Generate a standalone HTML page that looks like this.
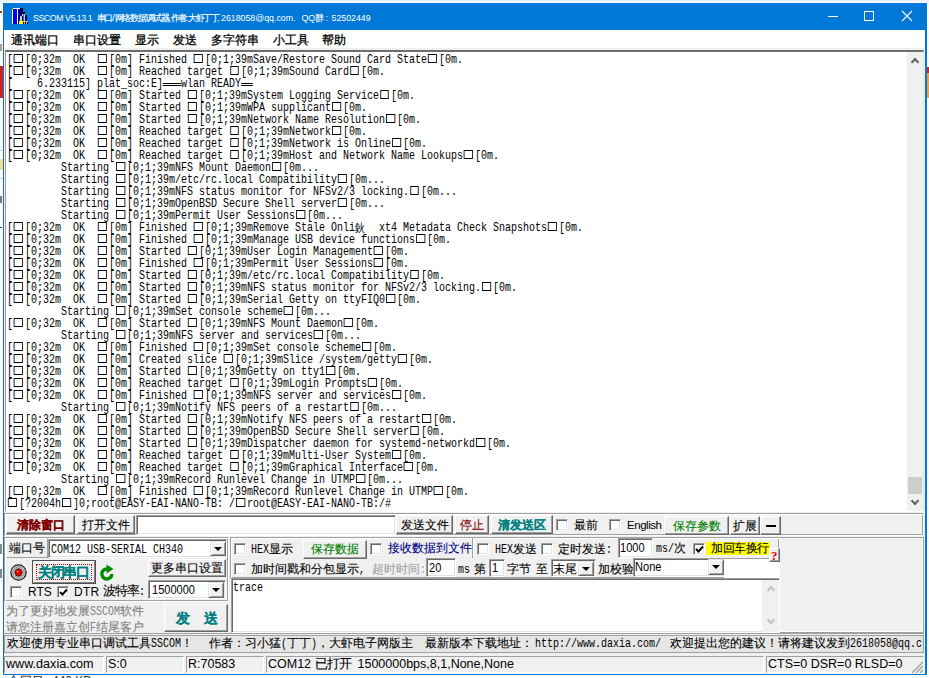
<!DOCTYPE html>
<html><head><meta charset="utf-8">
<style>
*,*:before,*:after{margin:0;padding:0;box-sizing:border-box}
html,body{width:929px;height:678px;overflow:hidden;background:#fff}
body{position:relative;font-family:"Liberation Sans",sans-serif;font-size:12px;color:#000}
.a{position:absolute}
#win{left:3px;top:3px;width:924px;height:672px;background:#F0F0F0;border-left:1px solid #0078D7;border-right:2px solid #0078D7;border-bottom:1px solid #0078D7}
#title{left:3px;top:3px;width:924px;height:27px;background:#0078D7}
.tt2{top:12px;color:#fff;font-size:8.8px;line-height:12px;white-space:nowrap}
#menu{left:4px;top:30px;width:921px;height:18px;background:#fff}
.mi{top:32px;font-size:12px;line-height:16px;white-space:nowrap}
.mi b.c{-webkit-text-stroke:0.3px #000}
#term{left:5px;top:50px;width:919px;height:462px;background:#fff;border-top:2px solid #6E6E6E;border-left:1px solid #A0A0A0;border-right:1px solid #E3E3E3;border-bottom:1px solid #fff}
#tt{left:7px;top:54px;width:1200px;height:460px;transform:scaleX(0.83333);transform-origin:0 0;font-family:"Liberation Mono",monospace;font-size:12px;line-height:12px;white-space:pre}
.ln{position:absolute;left:0;height:12px}
.bx{display:inline-block;position:relative;width:14.4px;height:12px;vertical-align:top}
.bx:after{content:"";position:absolute;left:1.2px;top:0px;width:10.8px;height:9px;border:1px solid #000;border-left-width:1.2px;border-right-width:1.2px}
.dl{display:inline-block;position:relative;height:12px;vertical-align:top}
.dl:after{content:"";position:absolute;left:0;right:0;top:5px;height:3px;border-top:1px solid #000;border-bottom:1px solid #000}
.cj{display:inline-block;width:14.4px;font-style:normal;font-family:"Liberation Sans",sans-serif;vertical-align:top}
#vs{left:907px;top:52px;width:16px;height:459px;background:#F0F0F0}
.chev{position:absolute;width:6px;height:6px;border-left:2px solid #606060;border-top:2px solid #606060}
.btn{position:absolute;background:#F0F0F0;border-top:1px solid #fff;border-left:1px solid #fff;border-right:1px solid #696969;border-bottom:1px solid #696969;box-shadow:inset -1px -1px 0 #A0A0A0;text-align:center;white-space:nowrap;font-size:12px}
.etch{position:absolute;border-top:1px solid #A0A0A0;border-left:1px solid #A0A0A0;border-right:1px solid #fff;border-bottom:1px solid #fff;box-shadow:inset 1px 1px 0 #fff,inset -1px -1px 0 #A0A0A0}
.sunk{position:absolute;background:#fff;border-top:1px solid #A0A0A0;border-left:1px solid #A0A0A0;border-right:1px solid #fff;border-bottom:1px solid #fff;box-shadow:inset 1px 1px 0 #696969,inset -1px -1px 0 #E3E3E3}
.cb{position:absolute;width:12px;height:12px;background:#fff;border-top:1px solid #A0A0A0;border-left:1px solid #A0A0A0;border-right:1px solid #fff;border-bottom:1px solid #fff;box-shadow:inset 1px 1px 0 #696969,inset -1px -1px 0 #E3E3E3}
.mq{top:636px;line-height:15px}
.sb{position:absolute;top:656px;height:17px;border-top:1px solid #A0A0A0;border-left:1px solid #A0A0A0;border-right:1px solid #fff;border-bottom:1px solid #fff}
.tt2 b.c{font-size:8.6px;-webkit-text-stroke:0.15px #fff}
.nx{transform:scaleX(.85);transform-origin:0 0}
.t{position:absolute;white-space:nowrap;font-size:12px;line-height:14px}
b.c{display:inline-block;font-weight:inherit;white-space:nowrap;-webkit-text-stroke:0.1px currentColor}
b.m{display:inline-block;white-space:pre;font-weight:inherit}
b.mi{display:inline-block;font-family:"Liberation Mono",monospace;transform:scaleX(.8333);transform-origin:0 0;font-weight:inherit}
.dd{position:absolute;width:16px;background:#F0F0F0;border-top:1px solid #E3E3E3;border-left:1px solid #E3E3E3;border-right:1px solid #696969;border-bottom:1px solid #696969;box-shadow:inset 1px 1px 0 #fff,inset -1px -1px 0 #A0A0A0}
.dd:after{content:"";position:absolute;left:3px;top:5px;border-left:4px solid transparent;border-right:4px solid transparent;border-top:4px solid #000}
</style></head><body>
<div class="a" style="left:0;top:66px;width:3px;height:32px;background:#D42020"></div>
<div class="a" style="left:0;top:159px;width:3px;height:11px;background:#F8DC90"></div>
<div class="a" style="left:927px;top:67px;width:2px;height:6px;background:#D42020"></div>
<div class="a" style="left:927px;top:73px;width:2px;height:25px;background:#F4A040"></div>
<div class="a" style="left:0;top:675px;width:929px;height:3px;background:#fff"></div>
<div class="t" style="left:8px;top:674px;color:#333;font-size:12px;line-height:14px;height:4px;overflow:hidden;clip-path:inset(1px 0 0 0)"><b class="c" style="width:12px">合</b><b class="c" style="width:12px">同</b><b class="c" style="width:12px">目</b></div>
<div class="t" style="left:52px;top:674px;color:#333;font-size:12px;line-height:14px;height:4px;overflow:hidden;clip-path:inset(1px 0 0 0)">440 KB</div>
<div class="a" style="left:0;top:0;width:929px;height:2px;background:#ECF0F8"></div>
<div class="a" style="left:0;top:11px;width:2px;height:2px;background:#B03030"></div>
<div class="a" style="left:0;top:44px;width:2px;height:7px;background:#806040;opacity:.6"></div>
<div class="a" style="left:0;top:150px;width:3px;height:1px;background:#D0D0D0"></div>
<div class="a" style="left:0;top:178px;width:3px;height:1px;background:#D0D0D0"></div>
<div class="a" style="left:0;top:196px;width:2px;height:7px;background:#404040;opacity:.7"></div>
<div class="a" style="left:0;top:227px;width:2px;height:1px;background:#404040"></div>
<div class="a" style="left:0;top:544px;width:2px;height:10px;background:#404040;opacity:.6"></div>
<div class="a" style="left:0;top:569px;width:2px;height:9px;background:#303060;opacity:.6"></div>
<div id="win" class="a"></div>
<div id="title" class="a"></div>
<!-- icon -->
<svg class="a" style="left:12px;top:8px" width="16" height="16" viewBox="0 0 16 16" shape-rendering="crispEdges">
<rect x="0" y="1" width="1" height="15" fill="#fff"/><rect x="1" y="0" width="8" height="1" fill="#fff"/>
<rect x="1" y="1" width="4" height="15" fill="#0000FF"/><rect x="5" y="1" width="1" height="15" fill="#fff"/>
<rect x="6" y="1" width="5" height="15" fill="#000080"/><rect x="8" y="0" width="3" height="1" fill="#000"/>
<rect x="10" y="1" width="1" height="5" fill="#000"/><rect x="11" y="4" width="2" height="2" fill="#000"/>
<rect x="8" y="8" width="2" height="6" fill="#C8C8B0"/><rect x="10" y="6" width="1" height="2" fill="#E0E0E0"/>
<rect x="13" y="7" width="2" height="6" fill="#000080"/><rect x="12" y="6" width="1" height="7" fill="#D0D0C0"/>
<rect x="10" y="13" width="6" height="1" fill="#C0C0C0"/>
<rect x="7" y="13" width="4" height="3" fill="#FFFF00"/><rect x="8" y="12" width="2" height="1" fill="#FFFF00"/>
<rect x="11" y="14" width="5" height="2" fill="#000"/><rect x="12" y="14" width="1" height="2" fill="#B0B0B0"/><rect x="14" y="14" width="1" height="2" fill="#B0B0B0"/>
</svg>
<div class="a tt2" style="left:33px;letter-spacing:-0.45px">SSCOM V5.13.1</div>
<div class="a tt2" style="left:96.5px"><b class="c" style="width:7.9px">串</b><b class="c" style="width:7.9px">口</b><b class="c" style="width:2.5px">/</b><b class="c" style="width:7.7px">网</b><b class="c" style="width:7.7px">络</b><b class="c" style="width:7.7px">数</b><b class="c" style="width:7.7px">据</b><b class="c" style="width:7.7px">调</b><b class="c" style="width:7.7px">试</b><b class="c" style="width:7.7px">器</b><b class="c" style="width:2px">,</b><b class="c" style="width:7.6px">作</b><b class="c" style="width:7.6px">者</b><b class="c" style="width:2.2px">:</b><b class="c" style="width:7.7px">大</b><b class="c" style="width:7.7px">虾</b><b class="c" style="width:7.7px">丁</b><b class="c" style="width:7.7px">丁</b></div>
<div class="a tt2" style="left:217px">,</div>
<div class="a tt2" style="left:221px">2618058@qq.com.</div>
<div class="a tt2" style="left:301.5px">QQ<b class="c" style="width:10.0px">群</b></div>
<div class="a tt2" style="left:325.5px">:</div>
<div class="a tt2" style="left:331.5px">52502449</div>
<!-- window buttons -->
<div class="a" style="left:828px;top:16px;width:10px;height:1px;background:#fff"></div>
<div class="a" style="left:864px;top:11px;width:10px;height:10px;border:1px solid #fff"></div>
<svg class="a" style="left:901px;top:10px" width="12" height="12" viewBox="0 0 12 12"><path d="M1 1L11 11M11 1L1 11" stroke="#fff" stroke-width="1.1"/></svg>

<div id="menu" class="a"></div>
<div class="a mi" style="left:11px"><b class="c" style="width:12px">通</b><b class="c" style="width:12px">讯</b><b class="c" style="width:12px">端</b><b class="c" style="width:12px">口</b></div>
<div class="a mi" style="left:73px"><b class="c" style="width:12px">串</b><b class="c" style="width:12px">口</b><b class="c" style="width:12px">设</b><b class="c" style="width:12px">置</b></div>
<div class="a mi" style="left:135px"><b class="c" style="width:12px">显</b><b class="c" style="width:12px">示</b></div>
<div class="a mi" style="left:173px"><b class="c" style="width:12px">发</b><b class="c" style="width:12px">送</b></div>
<div class="a mi" style="left:211px"><b class="c" style="width:12px">多</b><b class="c" style="width:12px">字</b><b class="c" style="width:12px">符</b><b class="c" style="width:12px">串</b></div>
<div class="a mi" style="left:273px"><b class="c" style="width:12px">小</b><b class="c" style="width:12px">工</b><b class="c" style="width:12px">具</b></div>
<div class="a mi" style="left:322px"><b class="c" style="width:12px">帮</b><b class="c" style="width:12px">助</b></div>

<div id="term" class="a"></div>
<div id="tt" class="a">
<div class="ln" style="top:0px">[<i class="bx"></i>[0;32m  OK  <i class="bx"></i>[0m] Finished <i class="bx"></i>[0;1;39mSave/Restore Sound Card State<i class="bx"></i>[0m.</div>
<div class="ln" style="top:12px">[<i class="bx"></i>[0;32m  OK  <i class="bx"></i>[0m] Reached target <i class="bx"></i>[0;1;39mSound Card<i class="bx"></i>[0m.</div>
<div class="ln" style="top:24px">[    6.233115] plat_soc:E]<i class="dl" style="width:21.6px"></i>wlan READY<i class="dl" style="width:14.4px"></i></div>
<div class="ln" style="top:36px">[<i class="bx"></i>[0;32m  OK  <i class="bx"></i>[0m] Started <i class="bx"></i>[0;1;39mSystem Logging Service<i class="bx"></i>[0m.</div>
<div class="ln" style="top:48px">[<i class="bx"></i>[0;32m  OK  <i class="bx"></i>[0m] Started <i class="bx"></i>[0;1;39mWPA supplicant<i class="bx"></i>[0m.</div>
<div class="ln" style="top:60px">[<i class="bx"></i>[0;32m  OK  <i class="bx"></i>[0m] Started <i class="bx"></i>[0;1;39mNetwork Name Resolution<i class="bx"></i>[0m.</div>
<div class="ln" style="top:72px">[<i class="bx"></i>[0;32m  OK  <i class="bx"></i>[0m] Reached target <i class="bx"></i>[0;1;39mNetwork<i class="bx"></i>[0m.</div>
<div class="ln" style="top:84px">[<i class="bx"></i>[0;32m  OK  <i class="bx"></i>[0m] Reached target <i class="bx"></i>[0;1;39mNetwork is Online<i class="bx"></i>[0m.</div>
<div class="ln" style="top:96px">[<i class="bx"></i>[0;32m  OK  <i class="bx"></i>[0m] Reached target <i class="bx"></i>[0;1;39mHost and Network Name Lookups<i class="bx"></i>[0m.</div>
<div class="ln" style="top:108px">         Starting <i class="bx"></i>[0;1;39mNFS Mount Daemon<i class="bx"></i>[0m...</div>
<div class="ln" style="top:120px">         Starting <i class="bx"></i>[0;1;39m/etc/rc.local Compatibility<i class="bx"></i>[0m...</div>
<div class="ln" style="top:132px">         Starting <i class="bx"></i>[0;1;39mNFS status monitor for NFSv2/3 locking.<i class="bx"></i>[0m...</div>
<div class="ln" style="top:144px">         Starting <i class="bx"></i>[0;1;39mOpenBSD Secure Shell server<i class="bx"></i>[0m...</div>
<div class="ln" style="top:156px">         Starting <i class="bx"></i>[0;1;39mPermit User Sessions<i class="bx"></i>[0m...</div>
<div class="ln" style="top:168px">[<i class="bx"></i>[0;32m  OK  <i class="bx"></i>[0m] Finished <i class="bx"></i>[0;1;39mRemove Stale Onli<i class="cj">鈥</i>  xt4 Metadata Check Snapshots<i class="bx"></i>[0m.</div>
<div class="ln" style="top:180px">[<i class="bx"></i>[0;32m  OK  <i class="bx"></i>[0m] Finished <i class="bx"></i>[0;1;39mManage USB device functions<i class="bx"></i>[0m.</div>
<div class="ln" style="top:192px">[<i class="bx"></i>[0;32m  OK  <i class="bx"></i>[0m] Started <i class="bx"></i>[0;1;39mUser Login Management<i class="bx"></i>[0m.</div>
<div class="ln" style="top:204px">[<i class="bx"></i>[0;32m  OK  <i class="bx"></i>[0m] Finished <i class="bx"></i>[0;1;39mPermit User Sessions<i class="bx"></i>[0m.</div>
<div class="ln" style="top:216px">[<i class="bx"></i>[0;32m  OK  <i class="bx"></i>[0m] Started <i class="bx"></i>[0;1;39m/etc/rc.local Compatibility<i class="bx"></i>[0m.</div>
<div class="ln" style="top:228px">[<i class="bx"></i>[0;32m  OK  <i class="bx"></i>[0m] Started <i class="bx"></i>[0;1;39mNFS status monitor for NFSv2/3 locking.<i class="bx"></i>[0m.</div>
<div class="ln" style="top:240px">[<i class="bx"></i>[0;32m  OK  <i class="bx"></i>[0m] Started <i class="bx"></i>[0;1;39mSerial Getty on ttyFIQ0<i class="bx"></i>[0m.</div>
<div class="ln" style="top:252px">         Starting <i class="bx"></i>[0;1;39mSet console scheme<i class="bx"></i>[0m...</div>
<div class="ln" style="top:264px">[<i class="bx"></i>[0;32m  OK  <i class="bx"></i>[0m] Started <i class="bx"></i>[0;1;39mNFS Mount Daemon<i class="bx"></i>[0m.</div>
<div class="ln" style="top:276px">         Starting <i class="bx"></i>[0;1;39mNFS server and services<i class="bx"></i>[0m...</div>
<div class="ln" style="top:288px">[<i class="bx"></i>[0;32m  OK  <i class="bx"></i>[0m] Finished <i class="bx"></i>[0;1;39mSet console scheme<i class="bx"></i>[0m.</div>
<div class="ln" style="top:300px">[<i class="bx"></i>[0;32m  OK  <i class="bx"></i>[0m] Created slice <i class="bx"></i>[0;1;39mSlice /system/getty<i class="bx"></i>[0m.</div>
<div class="ln" style="top:312px">[<i class="bx"></i>[0;32m  OK  <i class="bx"></i>[0m] Started <i class="bx"></i>[0;1;39mGetty on tty1<i class="bx"></i>[0m.</div>
<div class="ln" style="top:324px">[<i class="bx"></i>[0;32m  OK  <i class="bx"></i>[0m] Reached target <i class="bx"></i>[0;1;39mLogin Prompts<i class="bx"></i>[0m.</div>
<div class="ln" style="top:336px">[<i class="bx"></i>[0;32m  OK  <i class="bx"></i>[0m] Finished <i class="bx"></i>[0;1;39mNFS server and services<i class="bx"></i>[0m.</div>
<div class="ln" style="top:348px">         Starting <i class="bx"></i>[0;1;39mNotify NFS peers of a restart<i class="bx"></i>[0m...</div>
<div class="ln" style="top:360px">[<i class="bx"></i>[0;32m  OK  <i class="bx"></i>[0m] Started <i class="bx"></i>[0;1;39mNotify NFS peers of a restart<i class="bx"></i>[0m.</div>
<div class="ln" style="top:372px">[<i class="bx"></i>[0;32m  OK  <i class="bx"></i>[0m] Started <i class="bx"></i>[0;1;39mOpenBSD Secure Shell server<i class="bx"></i>[0m.</div>
<div class="ln" style="top:384px">[<i class="bx"></i>[0;32m  OK  <i class="bx"></i>[0m] Started <i class="bx"></i>[0;1;39mDispatcher daemon for systemd-networkd<i class="bx"></i>[0m.</div>
<div class="ln" style="top:396px">[<i class="bx"></i>[0;32m  OK  <i class="bx"></i>[0m] Reached target <i class="bx"></i>[0;1;39mMulti-User System<i class="bx"></i>[0m.</div>
<div class="ln" style="top:408px">[<i class="bx"></i>[0;32m  OK  <i class="bx"></i>[0m] Reached target <i class="bx"></i>[0;1;39mGraphical Interface<i class="bx"></i>[0m.</div>
<div class="ln" style="top:420px">         Starting <i class="bx"></i>[0;1;39mRecord Runlevel Change in UTMP<i class="bx"></i>[0m...</div>
<div class="ln" style="top:432px">[<i class="bx"></i>[0;32m  OK  <i class="bx"></i>[0m] Finished <i class="bx"></i>[0;1;39mRecord Runlevel Change in UTMP<i class="bx"></i>[0m.</div>
<div class="ln" style="top:444px"><i class="bx"></i>[?2004h<i class="bx"></i>]0;root@EASY-EAI-NANO-TB: /<i class="bx"></i>root@EASY-EAI-NANO-TB:/#</div>
</div>
<div id="vs" class="a">
 <div class="chev" style="left:5px;top:7px;transform:rotate(45deg)"></div>
 <div class="a" style="left:1px;top:425px;width:14px;height:17px;background:#CDCDCD"></div>
 <div class="chev" style="left:5px;top:446px;transform:rotate(225deg)"></div>
</div>

<!-- button row -->
<div class="etch" style="left:4px;top:513px;width:920px;height:23px"></div>
<div class="btn" style="left:6px;top:515px;width:69px;height:19px;color:#800000;font-weight:bold;line-height:19px"><b class="c" style="width:12px">清</b><b class="c" style="width:12px">除</b><b class="c" style="width:12px">窗</b><b class="c" style="width:12px">口</b></div>
<div class="btn" style="left:77px;top:515px;width:58px;height:19px;line-height:19px"><b class="c" style="width:12px">打</b><b class="c" style="width:12px">开</b><b class="c" style="width:12px">文</b><b class="c" style="width:12px">件</b></div>
<div class="sunk" style="left:136px;top:515px;width:260px;height:20px"></div>
<div class="btn" style="left:396px;top:515px;width:57px;height:19px;line-height:19px"><b class="c" style="width:12px">发</b><b class="c" style="width:12px">送</b><b class="c" style="width:12px">文</b><b class="c" style="width:12px">件</b></div>
<div class="btn" style="left:455px;top:515px;width:34px;height:19px;line-height:19px;color:#800000"><b class="c" style="width:12px">停</b><b class="c" style="width:12px">止</b></div>
<div class="btn" style="left:491px;top:515px;width:62px;height:19px;line-height:19px;color:#008080;font-weight:bold"><b class="c" style="width:12px">清</b><b class="c" style="width:12px">发</b><b class="c" style="width:12px">送</b><b class="c" style="width:12px">区</b></div>
<div class="cb" style="left:556px;top:519px"></div>
<div class="t" style="left:574px;top:518px"><b class="c" style="width:12px">最</b><b class="c" style="width:12px">前</b></div>
<div class="cb" style="left:609px;top:519px"></div>
<div class="t" style="left:627px;top:518px;font-size:11.5px;letter-spacing:-0.45px">English</div>
<div class="btn" style="left:664px;top:516px;width:65px;height:19px;line-height:19px;color:#008000"><b class="c" style="width:12px">保</b><b class="c" style="width:12px">存</b><b class="c" style="width:12px">参</b><b class="c" style="width:12px">数</b></div>
<div class="btn" style="left:730px;top:516px;width:30px;height:19px;line-height:19px"><b class="c" style="width:12px">扩</b><b class="c" style="width:12px">展</b></div>
<div class="btn" style="left:760px;top:516px;width:21px;height:19px"><div class="a" style="left:5px;top:8px;width:10px;height:2px;background:#000"></div></div>

<!-- left port panel -->
<div class="etch" style="left:4px;top:537px;width:225px;height:65px"></div>
<div class="btn" style="left:6px;top:538px;width:42px;height:20px;line-height:18px;border-right-color:#A0A0A0;border-bottom-color:#A0A0A0;box-shadow:none"><b class="c" style="width:12px">端</b><b class="c" style="width:12px">口</b><b class="c" style="width:12px">号</b></div>
<div class="sunk" style="left:48px;top:539px;width:179px;height:19px"></div>
<div class="t" style="left:51px;top:542px"><b class="m" style="width:132px"><b class="mi">COM12 USB-SERIAL CH340</b></b></div>
<div class="dd" style="left:210px;top:541px;height:15px"></div>
<!-- row2 -->
<svg class="a" style="left:10px;top:564px" width="17" height="17" viewBox="0 0 17 17"><circle cx="8.5" cy="8.5" r="7.6" fill="#E8E8E8" stroke="#202020" stroke-width="1.3"/><circle cx="8.5" cy="8.5" r="5.6" fill="#fff" stroke="#606060" stroke-width="1"/><circle cx="8.5" cy="8.5" r="4.2" fill="#202020"/><circle cx="8.5" cy="8.5" r="3.3" fill="#E00000"/><circle cx="7.6" cy="7.4" r="1" fill="#FF8080"/></svg>
<div class="a" style="left:32px;top:560px;width:64px;height:24px;border:1px solid #505050;background:#F0F0F0;text-align:center;white-space:nowrap"><div class="a" style="left:0;top:0;right:0;bottom:0;border-top:1px solid #fff;border-left:1px solid #fff;border-right:1px solid #808080;border-bottom:1px solid #808080"></div><div class="a" style="left:3px;top:3px;right:3px;bottom:3px;border:1px dotted #D00000"></div><div class="a" style="left:5px;top:2px;color:#008080;font-weight:bold;font-size:13.5px;line-height:20px"><b class="c" style="width:12.7px">关</b><b class="c" style="width:12.7px">闭</b><b class="c" style="width:12.7px">串</b><b class="c" style="width:12.7px">口</b></div></div>
<svg class="a" style="left:99px;top:563px" width="17" height="19" viewBox="0 0 17 19"><path d="M12.8 11A5 5 0 1 1 8 6" fill="none" stroke="#008C00" stroke-width="3.4"/><path d="M7.5 1.5L14.5 6L7.5 10.5Z" fill="#008C00"/></svg>
<div class="btn" style="left:148px;top:559px;width:78px;height:18px;line-height:16px"><b class="c" style="width:12px">更</b><b class="c" style="width:12px">多</b><b class="c" style="width:12px">串</b><b class="c" style="width:12px">口</b><b class="c" style="width:12px">设</b><b class="c" style="width:12px">置</b></div>
<div class="cb" style="left:10px;top:586px"></div>
<div class="t" style="left:28px;top:585px;font-size:12px">RTS</div>
<div class="cb" style="left:57px;top:586px"><svg class="a" style="left:1px;top:1px" width="9" height="9" viewBox="0 0 9 9"><path d="M1 4L3.5 6.5L8 1.5" fill="none" stroke="#000" stroke-width="2"/></svg></div>
<div class="t" style="left:74px;top:585px;font-size:12px;letter-spacing:0.3px">DTR</div>
<div class="t" style="left:103px;top:584px;font-size:13px"><b class="c" style="width:12px">波</b><b class="c" style="width:12px">特</b><b class="c" style="width:12px">率</b><b class="m" style="width:6px"><b class="mi">:</b></b></div>
<div class="sunk" style="left:148px;top:580px;width:78px;height:19px"></div>
<div class="t nx" style="left:152px;top:583px;font-size:13px">1500000</div>
<div class="dd" style="left:208px;top:582px;height:16px"></div>

<!-- right options panel -->
<div class="etch" style="left:230px;top:537px;width:550px;height:42px"></div>
<div class="a" style="left:472px;top:538px;width:2px;height:20px;border-left:1px solid #A0A0A0;border-right:1px solid #fff"></div>
<div class="cb" style="left:234px;top:543px"></div>
<div class="t" style="left:251px;top:542px"><b class="m" style="width:18px"><b class="mi">HEX</b></b><b class="c" style="width:12px">显</b><b class="c" style="width:12px">示</b></div>
<div class="btn" style="left:303px;top:540px;width:64px;height:19px;line-height:17px;color:#008000"><b class="c" style="width:12px">保</b><b class="c" style="width:12px">存</b><b class="c" style="width:12px">数</b><b class="c" style="width:12px">据</b></div>
<div class="cb" style="left:370px;top:543px"></div>
<div class="t" style="left:388px;top:541px;color:#000080"><b class="c" style="width:12px">接</b><b class="c" style="width:12px">收</b><b class="c" style="width:12px">数</b><b class="c" style="width:12px">据</b><b class="c" style="width:12px">到</b><b class="c" style="width:12px">文</b><b class="c" style="width:12px">件</b></div>
<div class="cb" style="left:477px;top:543px"></div>
<div class="t" style="left:495px;top:542px"><b class="m" style="width:18px"><b class="mi">HEX</b></b><b class="c" style="width:12px">发</b><b class="c" style="width:12px">送</b></div>
<div class="cb" style="left:541px;top:543px"></div>
<div class="t" style="left:558px;top:542px"><b class="c" style="width:12px">定</b><b class="c" style="width:12px">时</b><b class="c" style="width:12px">发</b><b class="c" style="width:12px">送</b><b class="m" style="width:6px"><b class="mi">:</b></b></div>
<div class="sunk" style="left:618px;top:538px;width:35px;height:20px"></div>
<div class="t nx" style="left:620px;top:541px;font-size:13px">1000</div>
<div class="t" style="left:656px;top:541px"><b class="m" style="width:18px"><b class="mi">ms/</b></b><b class="c" style="width:12px">次</b></div>
<div class="cb" style="left:693px;top:543px"><svg class="a" style="left:1px;top:1px" width="9" height="9" viewBox="0 0 9 9"><path d="M1 4L3.5 6.5L8 1.5" fill="none" stroke="#000" stroke-width="2"/></svg></div>
<div class="t" style="left:706px;top:542px;background:#FFFF00;height:13px;width:64px;line-height:13px;padding-left:5px"><b class="c" style="width:11.6px">加</b><b class="c" style="width:11.6px">回</b><b class="c" style="width:11.6px">车</b><b class="c" style="width:11.6px">换</b><b class="c" style="width:11.6px">行</b></div>
<div class="cb" style="left:234px;top:563px"></div>
<div class="t" style="left:251px;top:562px"><b class="c" style="width:12px">加</b><b class="c" style="width:12px">时</b><b class="c" style="width:12px">间</b><b class="c" style="width:12px">戳</b><b class="c" style="width:12px">和</b><b class="c" style="width:12px">分</b><b class="c" style="width:12px">包</b><b class="c" style="width:12px">显</b><b class="c" style="width:12px">示</b><b class="m" style="width:6px"><b class="mi">,</b></b></div>
<div class="t" style="left:372px;top:562px;color:#A0A0A0"><b class="c" style="width:12px">超</b><b class="c" style="width:12px">时</b><b class="c" style="width:12px">时</b><b class="c" style="width:12px">间</b><b class="m" style="width:6px"><b class="mi">:</b></b></div>
<div class="sunk" style="left:426px;top:558px;width:30px;height:19px"></div>
<div class="t nx" style="left:429px;top:561px;font-size:13px">20</div>
<div class="t" style="left:458px;top:562px"><b class="m" style="width:12px"><b class="mi">ms</b></b></div>
<div class="t" style="left:474px;top:562px"><b class="c" style="width:12px">第</b></div>
<div class="sunk" style="left:489px;top:559px;width:16px;height:18px"></div>
<div class="t nx" style="left:492px;top:561px;font-size:13px">1</div>
<div class="t" style="left:507px;top:562px"><b class="c" style="width:12px">字</b><b class="c" style="width:12px">节</b></div>
<div class="t" style="left:536px;top:562px"><b class="c" style="width:12px">至</b></div>
<div class="sunk" style="left:551px;top:559px;width:45px;height:18px"></div>
<div class="t" style="left:553px;top:562px"><b class="c" style="width:12px">末</b><b class="c" style="width:12px">尾</b></div>
<div class="dd" style="left:578px;top:561px;height:15px"></div>
<div class="t" style="left:598px;top:562px"><b class="c" style="width:12px">加</b><b class="c" style="width:12px">校</b><b class="c" style="width:12px">验</b></div>
<div class="a" style="left:724px;top:558px;width:55px;height:20px;background:#fff;border-top:1px solid #A0A0A0"></div>
<div class="sunk" style="left:633px;top:558px;width:91px;height:19px"></div>
<div class="btn" style="left:769px;top:548px;width:11px;height:14px;overflow:hidden"><div class="a" style="left:1px;top:-1px;color:#FF0000;font-weight:bold;font-size:13px;line-height:15px;font-family:'Liberation Serif',serif">?</div></div>
<div class="t nx" style="left:635px;top:560px;font-size:13px">None</div>
<div class="dd" style="left:708px;top:559px;height:16px"></div>

<!-- send textarea -->
<div class="sunk" style="left:231px;top:578px;width:549px;height:55px"></div>
<div class="t" style="left:233px;top:580px"><b class="m" style="width:30px"><b class="mi">trace</b></b></div>
<div class="a" style="left:762px;top:580px;width:17px;height:52px;background:#F0F0F0">
 <div class="chev" style="left:6px;top:7px;transform:rotate(45deg);border-color:#C0C0C0"></div>
 <div class="chev" style="left:6px;top:37px;transform:rotate(225deg);border-color:#C0C0C0"></div>
</div>
<!-- right gray area -->
<div class="a" style="left:780px;top:537px;width:144px;height:96px;border-top:1px solid #A0A0A0;border-right:1px solid #A0A0A0;border-bottom:1px solid #A0A0A0;box-shadow:inset -1px -1px 0 #fff"></div>

<!-- send panel -->
<div class="t" style="left:6px;top:604px;color:#808080;line-height:14px"><b class="c" style="width:12px">为</b><b class="c" style="width:12px">了</b><b class="c" style="width:12px">更</b><b class="c" style="width:12px">好</b><b class="c" style="width:12px">地</b><b class="c" style="width:12px">发</b><b class="c" style="width:12px">展</b><b class="m" style="width:30px"><b class="mi">SSCOM</b></b><b class="c" style="width:12px">软</b><b class="c" style="width:12px">件</b><br><b class="c" style="width:12px">请</b><b class="c" style="width:12px">您</b><b class="c" style="width:12px">注</b><b class="c" style="width:12px">册</b><b class="c" style="width:12px">嘉</b><b class="c" style="width:12px">立</b><b class="c" style="width:12px">创</b><b class="m" style="width:6px"><b class="mi">F</b></b><b class="c" style="width:12px">结</b><b class="c" style="width:12px">尾</b><b class="c" style="width:12px">客</b><b class="c" style="width:12px">户</b></div>
<div class="btn" style="left:164px;top:604px;width:64px;height:28px;color:#008080;font-weight:bold;font-size:14px;line-height:26px"><b class="c" style="width:12px">发</b>&nbsp;&nbsp;&nbsp;&nbsp;<b class="c" style="width:12px">送</b></div>

<!-- marquee -->
<div class="a" style="left:4px;top:633px;width:920px;height:1px;background:#A0A0A0"></div>
<div class="a" style="left:4px;top:635px;width:920px;height:18px;border-top:1px solid #A0A0A0;border-left:1px solid #A0A0A0;border-bottom:1px solid #A0A0A0;border-right:1px solid #A0A0A0;background:#E6E6E6"></div>
<div class="t mq" style="left:6.5px"><b class="c" style="width:12px">欢</b><b class="c" style="width:12px">迎</b><b class="c" style="width:12px">使</b><b class="c" style="width:12px">用</b><b class="c" style="width:12px">专</b><b class="c" style="width:12px">业</b><b class="c" style="width:12px">串</b><b class="c" style="width:12px">口</b><b class="c" style="width:12px">调</b><b class="c" style="width:12px">试</b><b class="c" style="width:12px">工</b><b class="c" style="width:12px">具</b><b class="m" style="width:30px"><b class="mi">SSCOM</b></b><b class="c" style="width:12px">！</b></div>
<div class="t mq" style="left:208.5px"><b class="c" style="width:12px">作</b><b class="c" style="width:12px">者</b><b class="c" style="width:12px">：</b><b class="c" style="width:12px">习</b><b class="c" style="width:12px">小</b><b class="c" style="width:12px">猛</b><b class="m" style="width:6px"><b class="mi">(</b></b><b class="c" style="width:12px">丁</b><b class="c" style="width:12px">丁</b><b class="m" style="width:6px"><b class="mi">)</b></b><b class="c" style="width:12px">，</b><b class="c" style="width:12px">大</b><b class="c" style="width:12px">虾</b><b class="c" style="width:12px">电</b><b class="c" style="width:12px">子</b><b class="c" style="width:12px">网</b><b class="c" style="width:12px">版</b><b class="c" style="width:12px">主</b></div>
<div class="t mq" style="left:424.5px"><b class="c" style="width:12px">最</b><b class="c" style="width:12px">新</b><b class="c" style="width:12px">版</b><b class="c" style="width:12px">本</b><b class="c" style="width:12px">下</b><b class="c" style="width:12px">载</b><b class="c" style="width:12px">地</b><b class="c" style="width:12px">址</b><b class="c" style="width:12px">：</b></div>
<div class="t mq" style="left:535px"><b class="m" style="width:24px"><b class="mi">http</b></b><b class="m" style="width:102px"><b class="mi">://www.daxia.com/</b></b></div>
<div class="t mq" style="left:670px;width:252px;overflow:hidden"><b class="c" style="width:12px">欢</b><b class="c" style="width:12px">迎</b><b class="c" style="width:12px">提</b><b class="c" style="width:12px">出</b><b class="c" style="width:12px">您</b><b class="c" style="width:12px">的</b><b class="c" style="width:12px">建</b><b class="c" style="width:12px">议</b><b class="c" style="width:12px">！</b><b class="c" style="width:12px">请</b><b class="c" style="width:12px">将</b><b class="c" style="width:12px">建</b><b class="c" style="width:12px">议</b><b class="c" style="width:12px">发</b><b class="c" style="width:12px">到</b><b class="m" style="width:84px"><b class="mi">2618058@qq.com</b></b></div>

<!-- status bar -->
<div class="sb" style="left:4px;width:100px"></div>
<div class="t" style="left:6px;top:657px;font-size:12.6px;line-height:15px">www.daxia.com</div>
<div class="sb" style="left:106px;width:78px"></div>
<div class="t" style="left:108px;top:657px;font-size:12.5px;line-height:15px">S:0</div>
<div class="sb" style="left:186px;width:78px"></div>
<div class="t" style="left:188px;top:657px;font-size:12.5px;line-height:15px">R:70583</div>
<div class="sb" style="left:266px;width:498px"></div>
<div class="t" style="left:268px;top:657px;font-size:12.5px;line-height:15px">COM12 <b class="c" style="width:12px">已</b><b class="c" style="width:12px">打</b><b class="c" style="width:12px">开</b>&nbsp;&nbsp;1500000bps,8,1,None,None</div>
<div class="sb" style="left:766px;width:158px"></div>
<div class="t" style="left:768px;top:657px;font-size:12.5px;line-height:15px">CTS=0 DSR=0 RLSD=0</div>
<svg class="a" style="left:911px;top:661px" width="13" height="12" viewBox="0 0 13 12"><path d="M12 1L1 12M12 5L5 12M12 9L9 12" stroke="#A0A0A0" stroke-width="1.4"/></svg>
</body></html>
